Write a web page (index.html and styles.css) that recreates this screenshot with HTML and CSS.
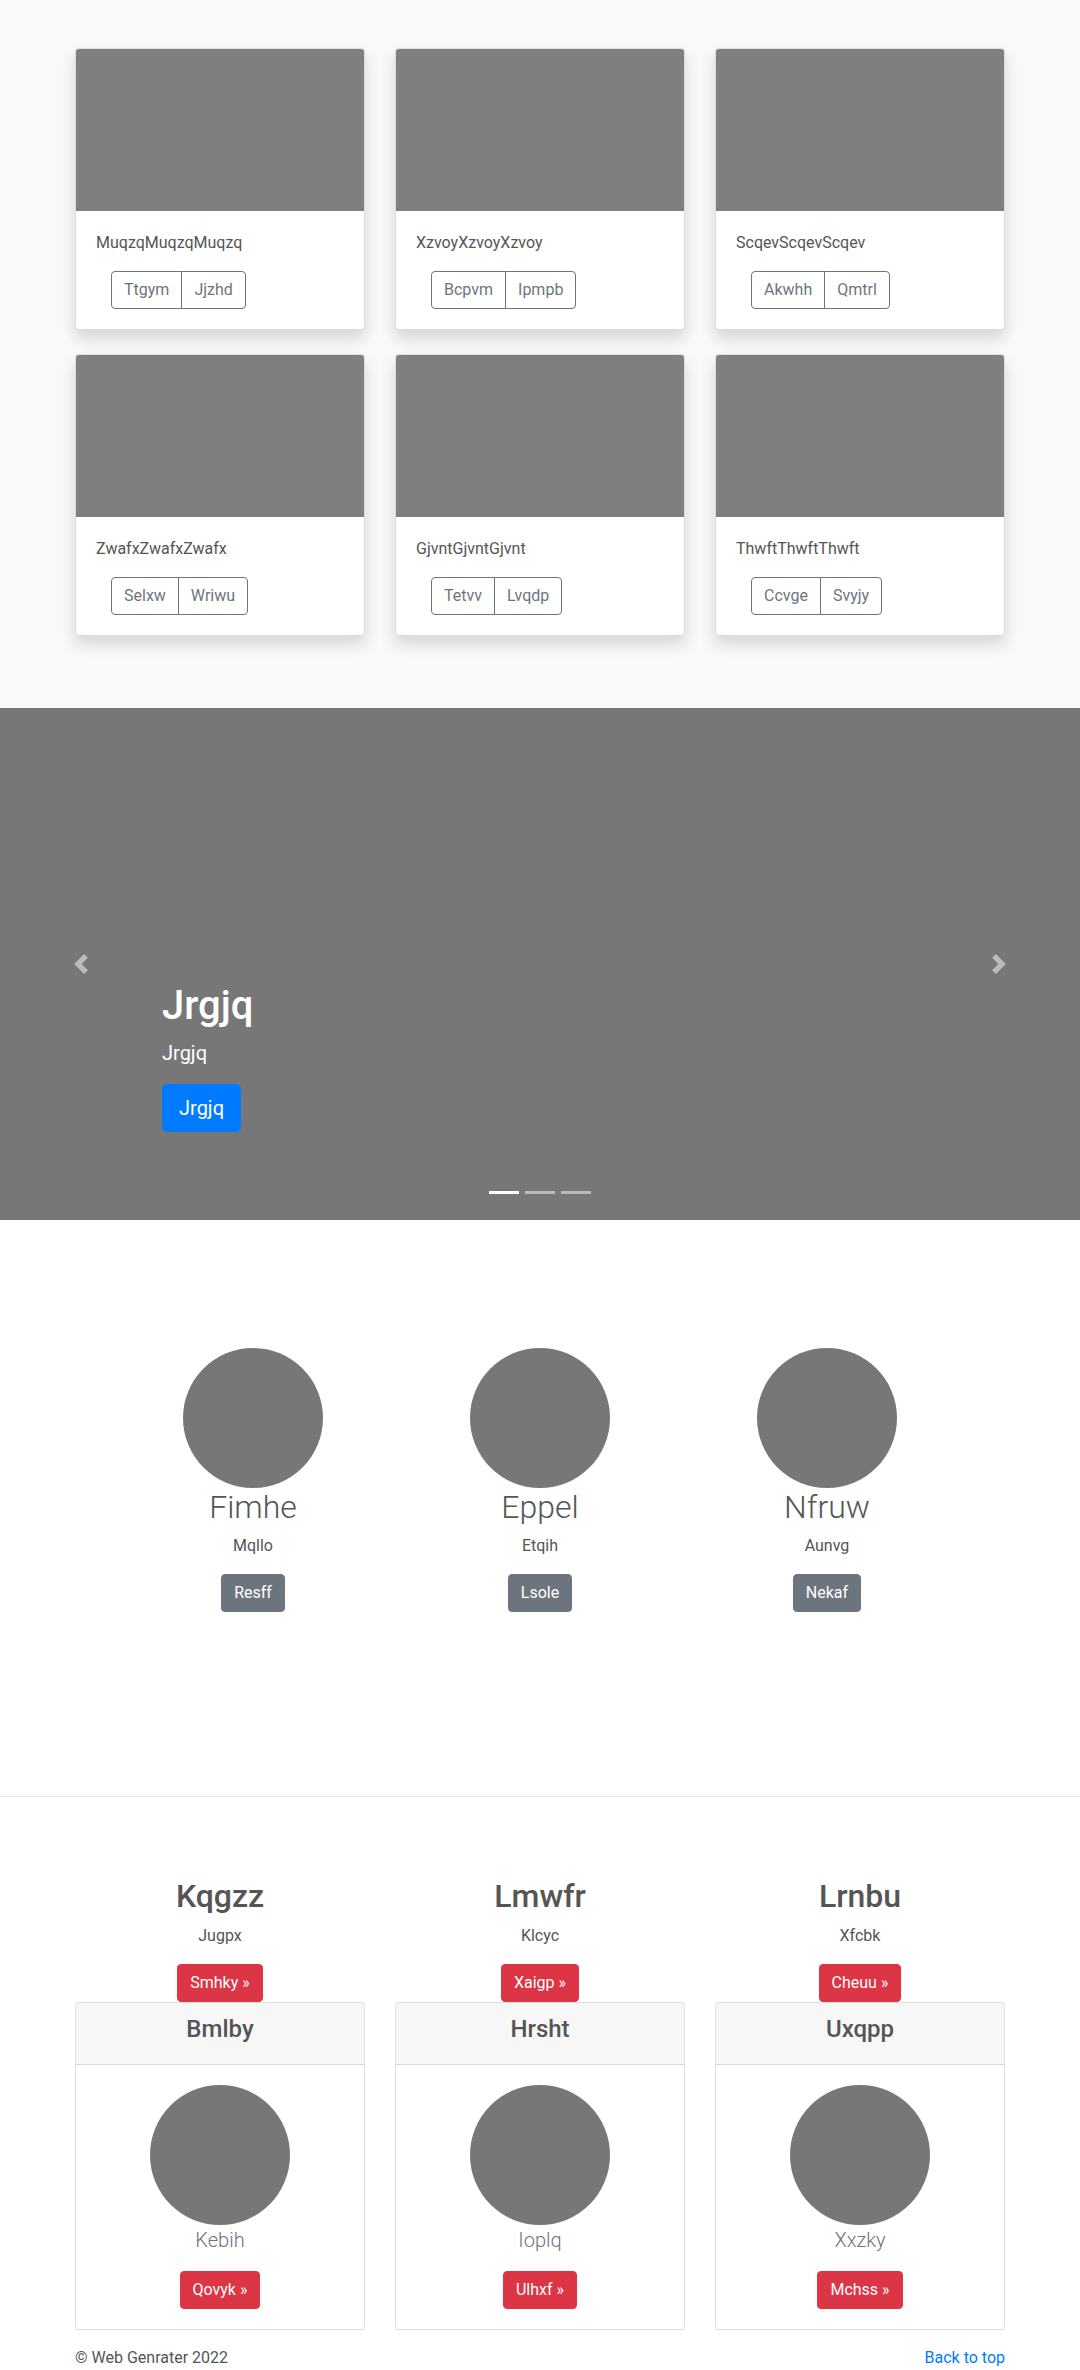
FILE: index.html
```html
<!DOCTYPE html>
<html lang="en">
<head>
<meta charset="utf-8">
<title>Web Genrater</title>
<link rel="stylesheet" href="styles.css">
</head>
<body>
<section class="album">
  <div class="container">
    <div class="card-grid">
      <div class="card shadow">
        <div class="thumb"></div>
        <div class="card-body">
          <p class="card-text">MuqzqMuqzqMuqzq</p>
          <div class="btn-group"><button class="btn btn-outline">Ttgym</button><button class="btn btn-outline">Jjzhd</button></div>
        </div>
      </div>
      <div class="card shadow">
        <div class="thumb"></div>
        <div class="card-body">
          <p class="card-text">XzvoyXzvoyXzvoy</p>
          <div class="btn-group"><button class="btn btn-outline">Bcpvm</button><button class="btn btn-outline">Ipmpb</button></div>
        </div>
      </div>
      <div class="card shadow">
        <div class="thumb"></div>
        <div class="card-body">
          <p class="card-text">ScqevScqevScqev</p>
          <div class="btn-group"><button class="btn btn-outline">Akwhh</button><button class="btn btn-outline">Qmtrl</button></div>
        </div>
      </div>
      <div class="card shadow">
        <div class="thumb"></div>
        <div class="card-body">
          <p class="card-text">ZwafxZwafxZwafx</p>
          <div class="btn-group"><button class="btn btn-outline">Selxw</button><button class="btn btn-outline">Wriwu</button></div>
        </div>
      </div>
      <div class="card shadow">
        <div class="thumb"></div>
        <div class="card-body">
          <p class="card-text">GjvntGjvntGjvnt</p>
          <div class="btn-group"><button class="btn btn-outline">Tetvv</button><button class="btn btn-outline">Lvqdp</button></div>
        </div>
      </div>
      <div class="card shadow">
        <div class="thumb"></div>
        <div class="card-body">
          <p class="card-text">ThwftThwftThwft</p>
          <div class="btn-group"><button class="btn btn-outline">Ccvge</button><button class="btn btn-outline">Svyjy</button></div>
        </div>
      </div>
    </div>
  </div>
</section>

<section class="carousel">
  <ol class="indicators">
    <li class="active"></li>
    <li></li>
    <li></li>
  </ol>
  <div class="caption">
    <h1>Jrgjq</h1>
    <p class="caption-text">Jrgjq</p>
    <p class="caption-action"><a class="btn btn-lg btn-primary" href="#">Jrgjq</a></p>
  </div>
  <a class="control control-prev" href="#" aria-label="Previous">
    <svg width="20" height="20" viewBox="0 0 8 8" fill="#fff"><path d="M5.25 0l-4 4 4 4 1.5-1.5L4.25 4l2.5-2.5L5.25 0z"/></svg>
  </a>
  <a class="control control-next" href="#" aria-label="Next">
    <svg width="20" height="20" viewBox="0 0 8 8" fill="#fff"><path d="M2.75 0l-1.5 1.5L3.75 4l-2.5 2.5L2.75 8l4-4-4-4z"/></svg>
  </a>
</section>

<section class="marketing">
  <div class="marketing-grid">
    <div class="feature">
      <div class="circle"></div>
      <h2>Fimhe</h2>
      <p>Mqllo</p>
      <p><a class="btn btn-secondary" href="#">Resff</a></p>
    </div>
    <div class="feature">
      <div class="circle"></div>
      <h2>Eppel</h2>
      <p>Etqih</p>
      <p><a class="btn btn-secondary" href="#">Lsole</a></p>
    </div>
    <div class="feature">
      <div class="circle"></div>
      <h2>Nfruw</h2>
      <p>Aunvg</p>
      <p><a class="btn btn-secondary" href="#">Nekaf</a></p>
    </div>
  </div>
</section>

<hr class="divider">

<section class="pricing">
  <div class="container">
    <div class="three-col">
      <div class="headline">
        <h2>Kqgzz</h2>
        <p>Jugpx</p>
        <a class="btn btn-danger" href="#">Smhky &raquo;</a>
      </div>
      <div class="headline">
        <h2>Lmwfr</h2>
        <p>Klcyc</p>
        <a class="btn btn-danger" href="#">Xaigp &raquo;</a>
      </div>
      <div class="headline">
        <h2>Lrnbu</h2>
        <p>Xfcbk</p>
        <a class="btn btn-danger" href="#">Cheuu &raquo;</a>
      </div>
    </div>
    <div class="three-col">
      <div class="card">
        <div class="card-header"><h4>Bmlby</h4></div>
        <div class="card-body centered">
          <div class="circle"></div>
          <p class="lead">Kebih</p>
          <a class="btn btn-danger" href="#">Qovyk &raquo;</a>
        </div>
      </div>
      <div class="card">
        <div class="card-header"><h4>Hrsht</h4></div>
        <div class="card-body centered">
          <div class="circle"></div>
          <p class="lead">Ioplq</p>
          <a class="btn btn-danger" href="#">Ulhxf &raquo;</a>
        </div>
      </div>
      <div class="card">
        <div class="card-header"><h4>Uxqpp</h4></div>
        <div class="card-body centered">
          <div class="circle"></div>
          <p class="lead">Xxzky</p>
          <a class="btn btn-danger" href="#">Mchss &raquo;</a>
        </div>
      </div>
    </div>
  </div>
</section>

<footer class="footer">
  <div class="container footer-row">
    <p>&copy; Web Genrater 2022</p>
    <a href="#">Back to top</a>
  </div>
</footer>
</body>
</html>
```

FILE: styles.css
```css
* {
  box-sizing: border-box;
}

html, body {
  margin: 0;
  padding: 0;
}

body {
  font-family: Roboto, "Liberation Sans", sans-serif;
  font-size: 16px;
  line-height: 1.5;
  color: #555;
  background: #fff;
}

p {
  margin: 0 0 16px;
}

h1, h2, h4 {
  margin: 0 0 8px;
  line-height: 1.2;
  font-weight: 500;
}

a {
  color: #007bff;
  text-decoration: none;
}

.container {
  width: 930px;
  margin: 0 auto;
}

/* ---------- album ---------- */
.album {
  background: #f8f9fa;
  padding: 48px 0;
}

.card-grid {
  display: grid;
  grid-template-columns: repeat(3, 290px);
  column-gap: 30px;
}

.card {
  background: #fff;
  border: 1px solid rgba(0, 0, 0, 0.125);
  border-radius: 4px;
  overflow: hidden;
}

.card.shadow {
  margin-bottom: 24px;
  box-shadow: 0 8px 16px rgba(0, 0, 0, 0.15);
}

.thumb {
  height: 162px;
  background: #7f7f7f;
}

.card-body {
  padding: 20px;
}

.card-text {
  margin-bottom: 16px;
}

.btn-group {
  display: inline-flex;
  margin-left: 15px;
}

.btn {
  display: inline-block;
  font-family: inherit;
  font-size: 16px;
  line-height: 24px;
  padding: 6px 12px;
  border: 1px solid transparent;
  border-radius: 4px;
  text-align: center;
  vertical-align: middle;
  cursor: pointer;
}

.btn-outline {
  background: transparent;
  color: #6c757d;
  border-color: #6c757d;
}

.btn-group .btn:first-child {
  border-top-right-radius: 0;
  border-bottom-right-radius: 0;
}

.btn-group .btn + .btn {
  margin-left: -1px;
  border-top-left-radius: 0;
  border-bottom-left-radius: 0;
}

.btn-lg {
  font-size: 20px;
  line-height: 30px;
  padding: 8px 16px;
  border-radius: 5px;
}

.btn-primary {
  background: #007bff;
  border-color: #007bff;
  color: #fff;
}

.btn-secondary {
  background: #6c757d;
  border-color: #6c757d;
  color: #fff;
}

.btn-danger {
  background: #dc3545;
  border-color: #dc3545;
  color: #fff;
}

/* ---------- carousel ---------- */
.carousel {
  position: relative;
  height: 512px;
  background: #777;
  overflow: hidden;
}

.caption {
  position: absolute;
  left: 15%;
  right: 15%;
  bottom: 52px;
  padding: 20px 0;
  color: #fff;
  text-align: left;
}

.caption h1 {
  font-size: 40px;
}

.caption-text {
  font-size: 20px;
  line-height: 30px;
  margin-bottom: 16px;
}

.caption-action {
  margin-bottom: 16px;
}

.control {
  position: absolute;
  top: 0;
  bottom: 0;
  width: 15%;
  display: flex;
  align-items: center;
  justify-content: center;
  opacity: 0.5;
}

.control-prev {
  left: 0;
}

.control-next {
  right: 0;
}

.indicators {
  position: absolute;
  left: 0;
  right: 0;
  bottom: 0;
  margin: 0 0 16px;
  padding: 0;
  list-style: none;
  display: flex;
  justify-content: center;
}

.indicators li {
  width: 30px;
  height: 3px;
  margin: 10px 3px;
  background: #fff;
  opacity: 0.5;
}

.indicators li.active {
  opacity: 1;
}

/* ---------- marketing ---------- */
.marketing {
  padding: 128px 0 168px;
}

.marketing-grid {
  width: 861px;
  margin: 0 auto;
  display: grid;
  grid-template-columns: repeat(3, 1fr);
  text-align: center;
}

.circle {
  width: 140px;
  height: 140px;
  border-radius: 50%;
  background: #777;
  margin: 0 auto;
}

.feature h2 {
  font-size: 32px;
  font-weight: 300;
}

.divider {
  margin: 0;
  border: 0;
  border-top: 1px solid rgba(0, 0, 0, 0.1);
}

/* ---------- pricing ---------- */
.pricing {
  padding-top: 80px;
}

.three-col {
  display: grid;
  grid-template-columns: repeat(3, 290px);
  column-gap: 30px;
}

.headline {
  text-align: center;
}

.headline h2 {
  font-size: 32px;
}

.card-header {
  background: rgba(0, 0, 0, 0.03);
  border-bottom: 1px solid rgba(0, 0, 0, 0.125);
  padding: 12px 20px;
  text-align: center;
}

.card-header h4 {
  font-size: 24px;
}

.centered {
  text-align: center;
}

.lead {
  font-size: 20px;
  line-height: 30px;
  font-weight: 300;
  color: #6c757d;
}

/* ---------- footer ---------- */
.footer {
  padding: 16px 0;
}

.footer-row {
  display: flex;
  justify-content: space-between;
}

.footer-row p {
  margin: 0;
}
```
